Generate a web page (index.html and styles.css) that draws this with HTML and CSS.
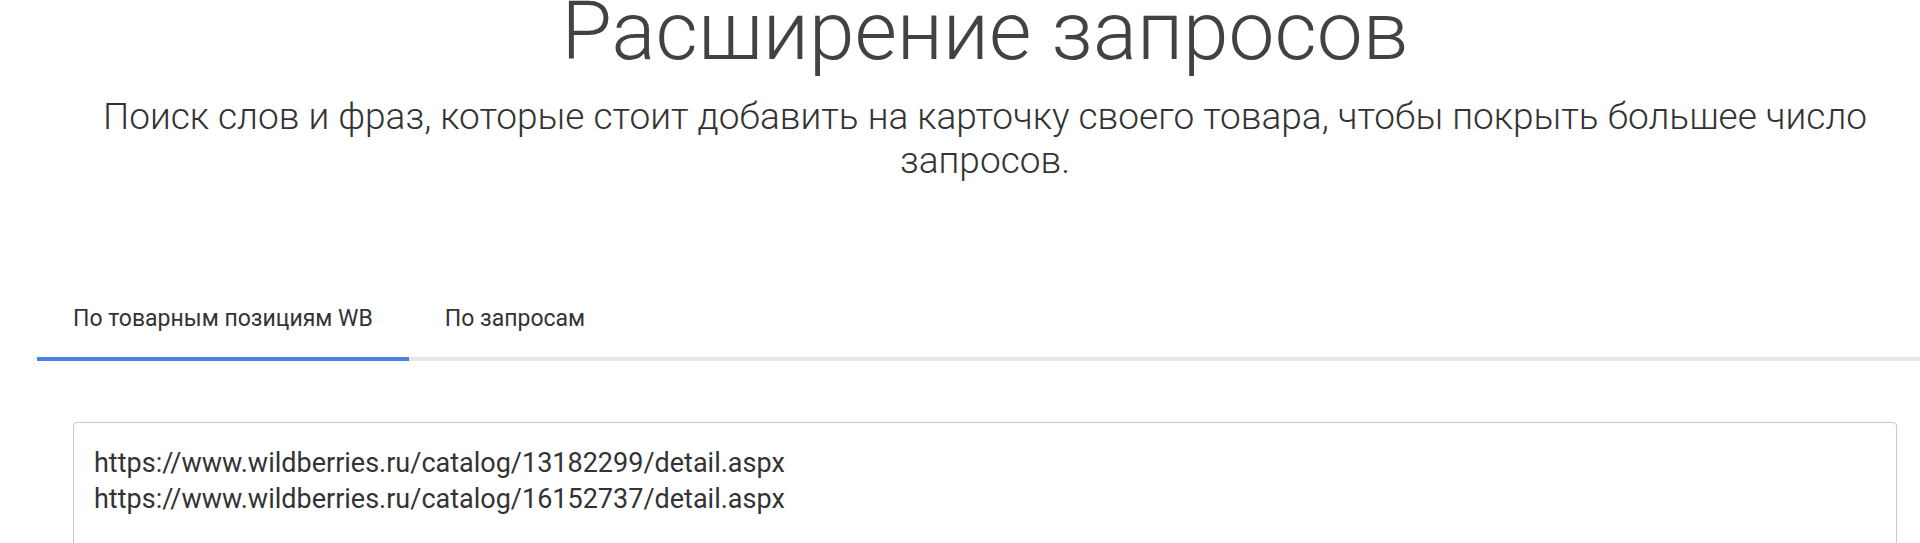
FILE: index.html
```html
<!DOCTYPE html>
<html lang="ru">
<head>
<meta charset="utf-8">
<title>Расширение запросов</title>
<link rel="stylesheet" href="styles.css">
</head>
<body>
<main class="page">
  <header class="hero">
    <h1 class="hero-title">Расширение запросов</h1>
    <p class="hero-sub">Поиск слов и фраз, которые стоит добавить на карточку своего товара, чтобы покрыть большее число запросов.</p>
  </header>
  <nav class="tabs">
    <button class="tab tab-active" type="button">По товарным позициям WB</button>
    <button class="tab" type="button">По запросам</button>
  </nav>
  <section class="panel">
    <textarea class="urls" rows="6">https://www.wildberries.ru/catalog/13182299/detail.aspx
https://www.wildberries.ru/catalog/16152737/detail.aspx</textarea>
  </section>
</main>
</body>
</html>
```
FILE: styles.css
```css
html, body {
  margin: 0;
  padding: 0;
  background: #ffffff;
  overflow: hidden;
}
body {
  font-family: Roboto, "Liberation Sans", Arial, sans-serif;
  color: #333333;
}
.page {
  width: 1896px;
  margin-left: 37px;
}
.hero {
  display: flex;
  flex-direction: column;
  align-items: center;
  text-align: center;
}
.hero-title {
  margin: 0;
  font-size: 82px;
  font-weight: 300;
  line-height: 62px;
  color: #424242;
}
.hero-sub {
  margin: 33px 0 0 0;
  max-width: 1820px;
  font-size: 37px;
  font-weight: 300;
  line-height: 44px;
  color: #333333;
}
.tabs {
  display: flex;
  margin-top: 114px;
  border-bottom: 4px solid #e8e8e8;
}
.tab {
  appearance: none;
  background: none;
  border: 0;
  margin: 0 0 -4px 0;
  padding: 8px 36px 25px 36px;
  font-family: Roboto, "Liberation Sans", Arial, sans-serif;
  font-size: 23px;
  font-weight: 400;
  line-height: 27px;
  color: #333333;
  border-bottom: 4px solid transparent;
  cursor: pointer;
}
.tab-active {
  border-bottom-color: #4a80e8;
}
.panel {
  padding: 61px 36px 0 36px;
}
.urls {
  display: block;
  box-sizing: border-box;
  width: 100%;
  height: 200px;
  margin: 0;
  padding: 22px 20px;
  border: 1px solid #c8c8c8;
  border-radius: 4px;
  resize: none;
  font-family: Roboto, "Liberation Sans", Arial, sans-serif;
  font-size: 27px;
  line-height: 36px;
  color: #333333;
  background: #ffffff;
}
```
